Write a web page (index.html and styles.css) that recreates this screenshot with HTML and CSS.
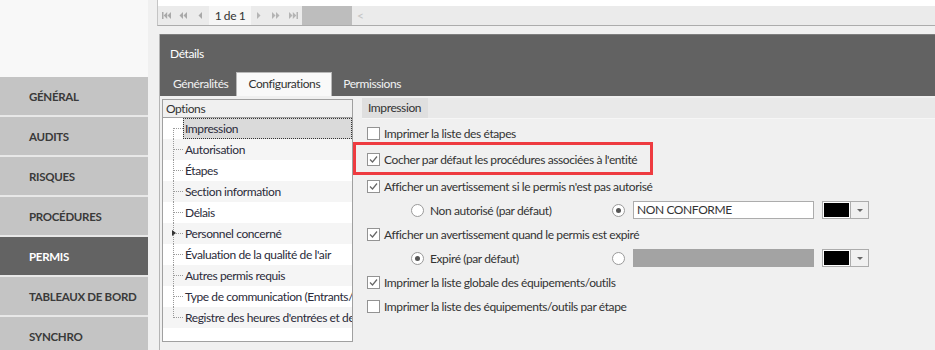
FILE: index.html
```html
<!DOCTYPE html>
<html lang="fr">
<head>
  <meta charset="UTF-8" />
  <meta name="viewport" content="width=device-width, initial-scale=1" />
  <title>Permis - Configurations</title>
  <link rel="stylesheet" href="styles.css">
</head>
<body>
  <div class="sidebar">
    <div class="sidebar-top"></div>
    <div class="nav-item">GÉNÉRAL</div>
    <div class="nav-item">AUDITS</div>
    <div class="nav-item">RISQUES</div>
    <div class="nav-item">PROCÉDURES</div>
    <div class="nav-item active">PERMIS</div>
    <div class="nav-item">TABLEAUX DE BORD</div>
    <div class="nav-item">SYNCHRO</div>
  </div>

  <div class="main">
    <div class="pager-wrap">
      <div class="pager">
        <span class="pg pg-first"><svg width="9" height="7" viewBox="0 0 9 7"><rect x="0" y="0" width="1.5" height="7"/><polygon points="5.2,0 1.7,3.5 5.2,7"/><polygon points="9,0 5.5,3.5 9,7"/></svg></span>
        <span class="pg pg-prev2"><svg width="8" height="7" viewBox="0 0 8 7"><polygon points="4,0 0.5,3.5 4,7"/><polygon points="8,0 4.5,3.5 8,7"/></svg></span>
        <span class="pg pg-prev"><svg width="4" height="7" viewBox="0 0 4 7"><polygon points="4,0 0.5,3.5 4,7"/></svg></span>
        <span class="pg-count">1 de 1</span>
        <span class="pg pg-next"><svg width="4" height="7" viewBox="0 0 4 7"><polygon points="0,0 3.5,3.5 0,7"/></svg></span>
        <span class="pg pg-next2"><svg width="8" height="7" viewBox="0 0 8 7"><polygon points="0,0 3.5,3.5 0,7"/><polygon points="4,0 7.5,3.5 4,7"/></svg></span>
        <span class="pg pg-last"><svg width="9" height="7" viewBox="0 0 9 7"><polygon points="0,0 3.5,3.5 0,7"/><polygon points="3.8,0 7.3,3.5 3.8,7"/><rect x="7.5" y="0" width="1.5" height="7"/></svg></span>
        <span class="pg-thumb"></span>
        <span class="pg-back">&lt;</span>
      </div>
    </div>

    <div class="details">
      <div class="details-head">
        <div class="details-title">Détails</div>
        <div class="tabs">
          <span class="tab">Généralités</span>
          <span class="tab active">Configurations</span>
          <span class="tab">Permissions</span>
        </div>
      </div>

      <div class="details-body">
        <div class="tree">
          <div class="tree-head">Options</div>
          <div class="node first selected"><span class="node-label">Impression</span></div>
          <div class="node"><span class="node-label">Autorisation</span></div>
          <div class="node"><span class="node-label">Étapes</span></div>
          <div class="node"><span class="node-label">Section information</span></div>
          <div class="node"><span class="node-label">Délais</span></div>
          <div class="node"><span class="ind"></span><span class="node-label">Personnel concerné</span></div>
          <div class="node"><span class="node-label">Évaluation de la qualité de l'air</span></div>
          <div class="node"><span class="node-label">Autres permis requis</span></div>
          <div class="node"><span class="node-label">Type de communication (Entrants/Sortants)</span></div>
          <div class="node last"><span class="node-label">Registre des heures d'entrées et de sorties</span></div>
        </div>

        <div class="group">
          <div class="group-head"><span class="group-tab">Impression</span></div>
          <div class="group-body">
            <div class="row">
              <span class="check"></span>
              <span>Imprimer la liste des étapes</span>
            </div>
            <div class="row row-marked">
              <span class="check on"></span>
              <span>Cocher par défaut les procédures associées à l'entité</span>
              <span class="mark"></span>
            </div>
            <div class="row row-after">
              <span class="check on"></span>
              <span>Afficher un avertissement si le permis n'est pas autorisé</span>
            </div>
            <div class="row sub">
              <span class="opt"><span class="radio"></span>Non autorisé (par défaut)</span>
              <span class="radio on"></span>
              <span class="text-field">NON CONFORME</span>
              <span class="swatch"><span class="swatch-color"></span><span class="swatch-drop"></span></span>
            </div>
            <div class="row">
              <span class="check on"></span>
              <span>Afficher un avertissement quand le permis est expiré</span>
            </div>
            <div class="row sub">
              <span class="opt"><span class="radio on"></span>Expiré (par défaut)</span>
              <span class="radio"></span>
              <span class="text-field disabled"></span>
              <span class="swatch"><span class="swatch-color"></span><span class="swatch-drop"></span></span>
            </div>
            <div class="row">
              <span class="check on"></span>
              <span>Imprimer la liste globale des équipements/outils</span>
            </div>
            <div class="row">
              <span class="check"></span>
              <span>Imprimer la liste des équipements/outils par étape</span>
            </div>
          </div>
        </div>
      </div>
    </div>
  </div>
</body>
</html>
```

FILE: styles.css
```css
html, body { height: 350px; }
body { margin: 0; display: flex; overflow: hidden; font-family: Lato, "Liberation Sans", sans-serif; font-size: 12px; letter-spacing: -0.4px; color: #333; background: #f0f0f0; }

/* sidebar */
.sidebar { width: 148px; flex: none; background: #f8f8f8; }
.sidebar-top { height: 77px; }
.nav-item { display: flex; align-items: center; height: 38px; padding-left: 29px; background: #c4c4c4; border-bottom: 2px solid #e8e8e8; font-weight: bold; font-size: 11.5px; letter-spacing: -0.3px; color: #3a3a3a; }
.nav-item.active { background: #636363; color: #fff; }

/* main column */
.main { flex: 1; min-width: 0; padding-left: 9px; }

.pager-wrap { height: 26px; box-sizing: border-box; padding-top: 6px; background: #fff; border-left: 1px solid #c4c4c4; border-bottom: 1px solid #acacac; }
.pager { display: flex; align-items: center; height: 19px; background: #ebebeb; }
.pg { display: flex; align-items: center; fill: #a9a9a9; }
.pg-first { margin-left: 4px; }
.pg-prev2 { margin-left: 8px; }
.pg-prev { margin-left: 11px; }
.pg-count { margin-left: 7px; width: 42px; height: 19px; line-height: 19px; text-align: center; background: #f6f6f6; color: #333; }
.pg-next { margin-left: 6px; fill: #b4b4b4; }
.pg-next2 { margin-left: 11px; fill: #b4b4b4; }
.pg-last { margin-left: 9px; fill: #b4b4b4; }
.pg-thumb { margin-left: 4px; width: 50px; height: 19px; background: #bdbdbd; }
.pg-back { margin-left: 5px; color: #c4c4c4; font-size: 12px; }

/* details panel */
.details { margin: 8px 0 0 2px; border-left: 1px solid #b4b4b4; height: 320px; display: flex; flex-direction: column; }
.details-head { background: #626262; border-top: 1px solid #7e7e7e; }
.details-title { height: 37px; line-height: 37px; padding-left: 10px; color: #fff; }
.tabs { display: flex; height: 24px; padding-left: 2px; }
.tab { padding: 0 8px 0 11px; line-height: 24px; color: #f2f2f2; box-sizing: border-box; }
.tab.active { background: #f9f9f9; color: #333; border: 1px solid #b8b8b8; border-bottom: none; line-height: 22px; padding: 0 11px; }

.details-body { flex: 1; display: flex; gap: 9px; padding: 2px 0 0 2px; background: #f0f0f0; }

/* options tree */
.tree { width: 191px; height: 243px; box-sizing: border-box; margin-top: 1px; background: #fff; border: 1px solid #a0a0a0; overflow: hidden; }
.tree-head { height: 17px; line-height: 17px; padding-left: 3px; background: #f0f0f0; border-bottom: 1px solid #a0a0a0; color: #333; }
.node { position: relative; height: 21px; line-height: 21px; padding-left: 20px; white-space: nowrap; }
.node:nth-child(odd) { background: #f5f5f5; }
.node::before { content: ""; position: absolute; left: 10px; top: 0; bottom: 0; border-left: 1px dotted #9a9a9a; }
.node.first::before { top: 10px; }
.node.last::before { bottom: 10px; }
.node::after { content: ""; position: absolute; left: 11px; top: 10px; width: 9px; border-top: 1px dotted #9a9a9a; }
.node-label { display: block; padding-left: 2px; color: #2b2b3a; }
.node.selected .node-label { background: #dadada; outline: 1px dotted #333; outline-offset: -1px; }
.ind { position: absolute; left: 9px; top: 7px; width: 0; height: 0; border-left: 4px solid #333; border-top: 3px solid transparent; border-bottom: 3px solid transparent; z-index: 1; }

/* impression group */
.group { flex: 1; display: flex; flex-direction: column; height: 247px; }
.group-head { height: 20px; background: #e9e9e9; display: flex; }
.group-tab { padding: 0 7px 0 6px; line-height: 20px; background: #dfdfdf; }
.group-body { flex: 1; padding: 2px 0 0 5px; background: #f0f0f0; border-top: 1px solid #f6f6f6; }

.row { display: flex; align-items: center; height: 24px; white-space: nowrap; }
.row-marked { position: relative; margin-top: 2px; }
.row-after { margin-top: 3px; }
.row.sub { padding-left: 44px; }
.mark { position: absolute; left: -14px; top: -5px; width: 300px; height: 33px; box-sizing: border-box; border: 3px solid #ee3b40; }

.check { width: 13px; height: 13px; box-sizing: border-box; margin-right: 4px; background: #fff; border: 1px solid #939393; flex: none; }
.check.on { background: #fff url("data:image/svg+xml;utf8,<svg xmlns='http://www.w3.org/2000/svg' width='11' height='11'><polyline points='2,5.5 4.5,8 9,2.5' fill='none' stroke='%23666' stroke-width='1.2'/></svg>") no-repeat center; }

.opt { display: flex; align-items: center; width: 201px; }
.radio { width: 13px; height: 13px; box-sizing: border-box; border-radius: 50%; border: 1px solid #9a9a9a; background: #fff; margin-right: 6px; flex: none; position: relative; }
.radio.on::after { content: ""; position: absolute; left: 3px; top: 3px; width: 5px; height: 5px; border-radius: 50%; background: #555; }
.text-field { margin-left: 2px; width: 181px; height: 18px; box-sizing: border-box; border: 1px solid #acacac; background: #fff; line-height: 16px; padding-left: 3px; color: #333; }
.text-field.disabled { background: #a3a3a3; border-color: #a3a3a3; }
.swatch { display: flex; margin-left: 8px; height: 18px; }
.swatch-color { width: 29px; height: 18px; box-sizing: border-box; border: 1px solid #acacac; padding: 1px; background: #fff; }
.swatch-color::before { content: ""; display: block; height: 100%; background: #000; }
.swatch-drop { width: 18px; height: 18px; box-sizing: border-box; border: 1px solid #acacac; border-left: none; background: #f0f0f0; display: flex; align-items: center; justify-content: center; }
.swatch-drop::before { content: ""; width: 0; height: 0; border-left: 3px solid transparent; border-right: 3px solid transparent; border-top: 3px solid #666; }
```
